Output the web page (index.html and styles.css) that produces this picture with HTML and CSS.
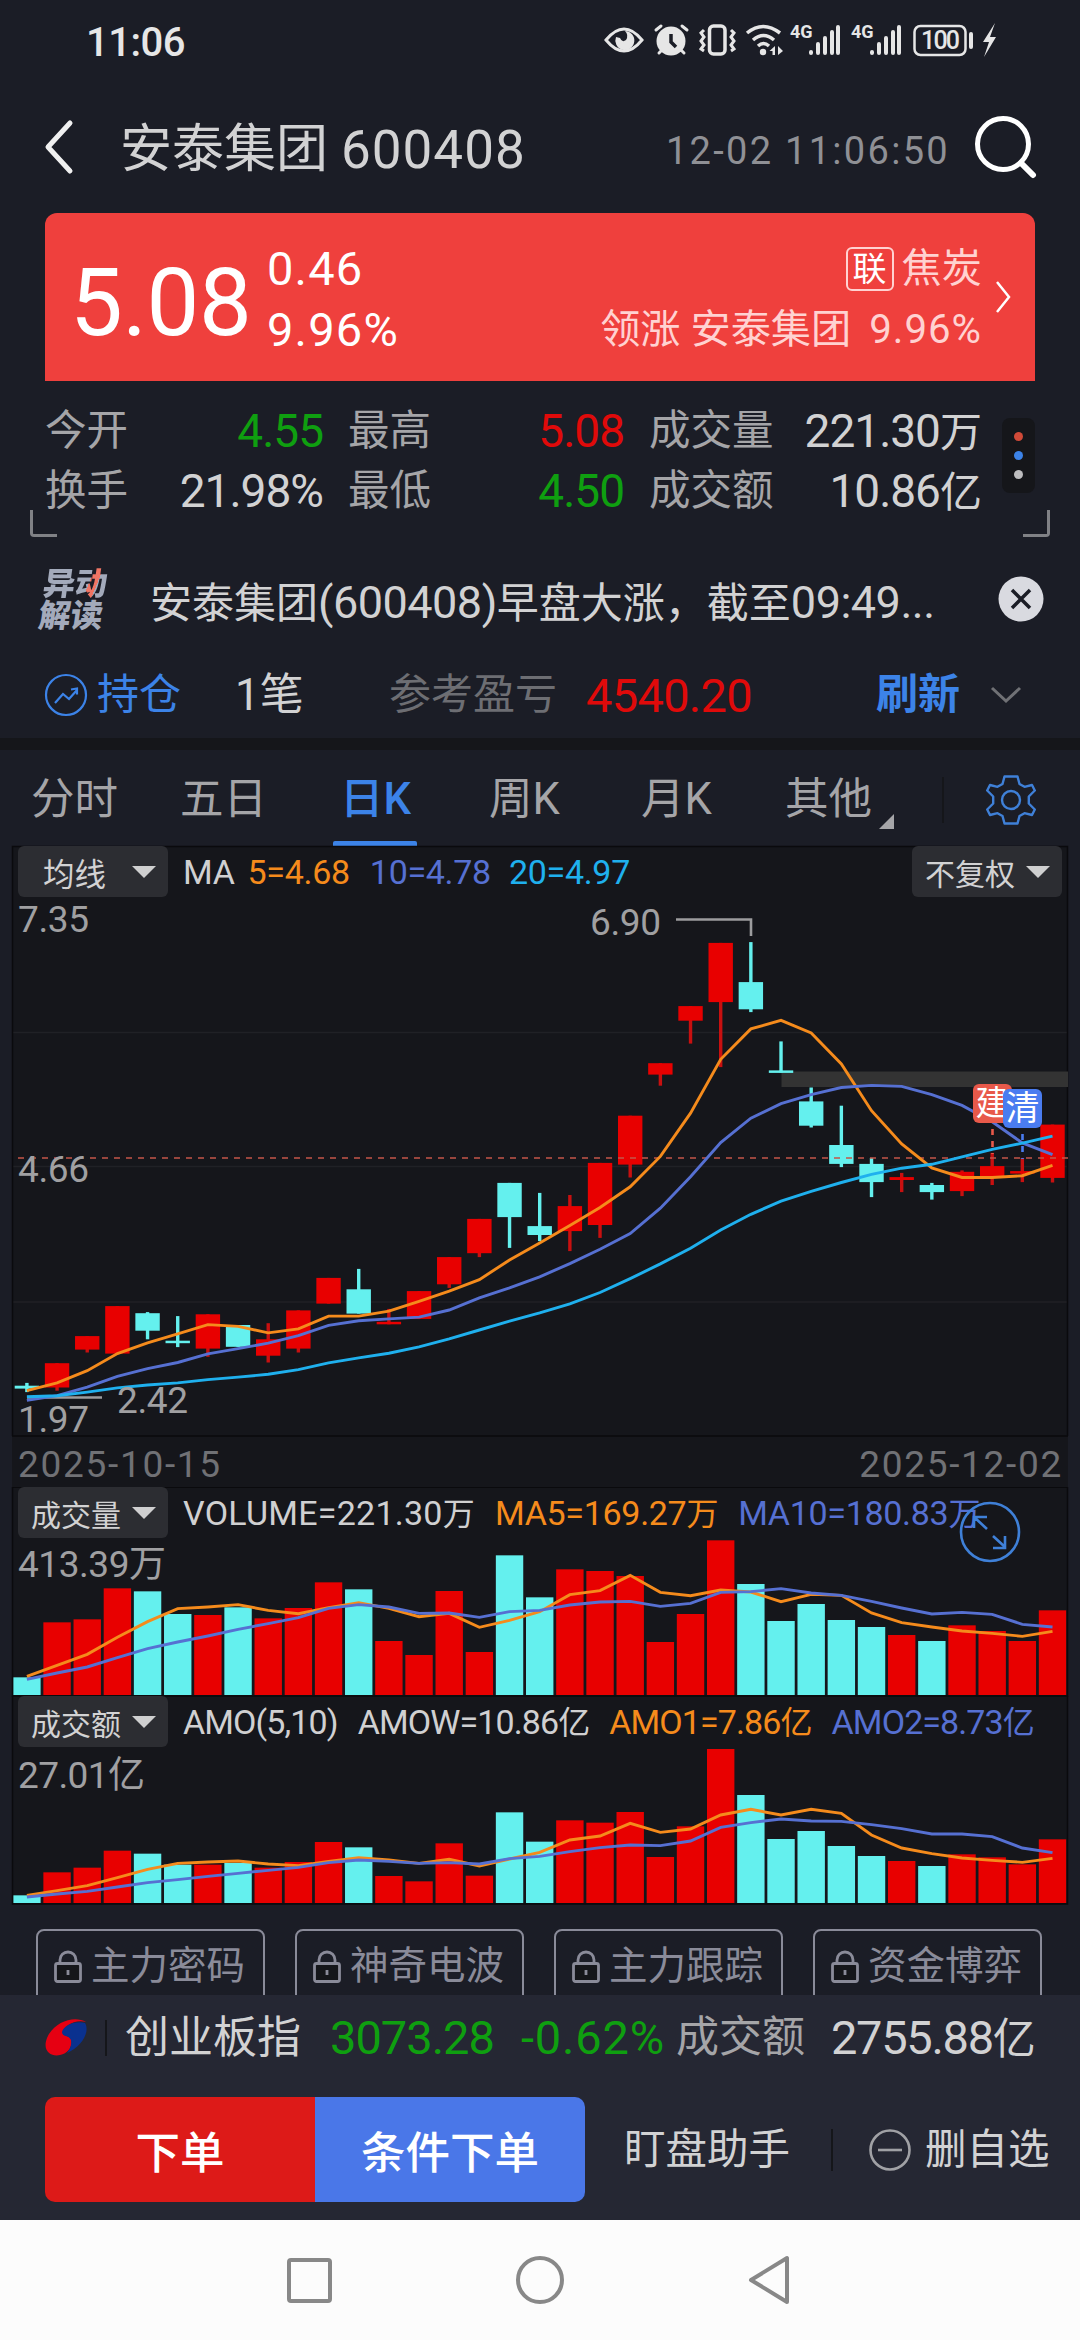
FILE: index.html
```html
<!DOCTYPE html>
<html lang="zh-CN">
<head>
    <meta charset="UTF-8">
    <title>安泰集团 600408</title>
    <link rel="stylesheet" href="styles.css">
</head>
<body>
    <div class="statusbar">
        <span class="clock">11:06</span>
        <svg class="status-icons" width="410" height="50" viewBox="600 15 410 50">
            <g fill="none" stroke="#e6e6e6" stroke-width="3">
                <path d="M606 40q18-22 36 0q-18 22-36 0z"/>
                <rect x="709.500" y="26" width="15.500" height="28" rx="4" stroke-width="3.500"/>
                <path d="M704 30l-3 3 3 4-3 4 3 4-3 4 3 2M731 30l3 3-3 4 3 4-3 4 3 4-3 2"/>
                <path d="M747 33q16-13 33 0M753 40q10.500-9 21 0M758 46q5.500-5 11 0" stroke-width="3.500"/>
                <rect x="914.500" y="26" width="51" height="29" rx="6" stroke-width="2.500"/>
                <path d="M971 34v13" stroke-width="4" stroke-linecap="round"/>
                <path d="M656 30l5-4M687 30l-5-4M659 53l4-4M684 53l-4-4" stroke-linecap="round"/>
                <path d="M811 52v1M818 44v9M825 38v15M832 32v21M838 27v26" stroke-width="4" stroke-linecap="round"/>
                <path d="M872 52v1M879 44v9M886 38v15M893 32v21M899 27v26" stroke-width="4" stroke-linecap="round"/>
            </g>
            <g fill="#e6e6e6">
                <path d="M616 37a9.500 9.500 0 1 0 9-6q4 4 1 9-4 3-6-2z"/>
                <circle cx="671" cy="41" r="14.500"/>
                <circle cx="763" cy="52" r="3.200"/>
                <path d="M775 46v9h-2.500v-4h-3zM778 46v9l5-4z"/>
                <path d="M995 23l-12 19h6l-5 15 12-20h-6z"/>
            </g>
            <path d="M671 34v8l5 5" fill="none" stroke="#1b1d26" stroke-width="3.500"/>
            <text class="net" x="790" y="38">4G</text>
            <text class="net" x="851" y="38">4G</text>
            <text class="battery" x="921" y="49" textLength="39">100</text>
        </svg>
    </div>

    <header class="header">
        <svg class="back" width="32" height="56" viewBox="0 0 32 56"><path d="M27 4L5 28l22 24" fill="none" stroke="#f0f0f0" stroke-width="5" stroke-linecap="round" stroke-linejoin="round"/></svg>
        <h1 class="name">安泰集团</h1>
        <span class="code">600408</span>
        <span class="time">12-02 11:06:50</span>
        <svg width="64" height="64" viewBox="0 0 64 64"><g fill="none" stroke="#fff" stroke-width="5"><circle cx="29" cy="29" r="25.500"/><path d="M47 48l12 12" stroke-width="6" stroke-linecap="round"/></g></svg>
    </header>

    <section class="price-card">
        <span class="price">5.08</span>
        <div class="change">
            <span>0.46</span>
            <span>9.96%</span>
        </div>
        <div class="sector">
            <div><span class="tag">联</span><span>焦炭</span></div>
            <div>领涨 安泰集团 <span class="pct">9.96%</span></div>
        </div>
        <svg class="more" width="20" height="36" viewBox="0 0 20 36"><path d="M3 3l12 15L3 33" fill="none" stroke="#fff" stroke-width="2.500"/></svg>
    </section>

    <section class="quote">
        <div class="quote-grid">
            <div class="cell"><label>今开</label><b class="down">4.55</b></div>
            <div class="cell"><label>最高</label><b class="up">5.08</b></div>
            <div class="cell"><label>成交量</label><b>221.30<i>万</i></b></div>
            <div class="cell"><label>换手</label><b>21.98%</b></div>
            <div class="cell"><label>最低</label><b class="down">4.50</b></div>
            <div class="cell"><label>成交额</label><b>10.86<i>亿</i></b></div>
        </div>
        <div class="dots"><i class="dot red"></i><i class="dot blue"></i><i class="dot"></i></div>
        <div class="bracket left"></div>
        <div class="bracket right"></div>
    </section>

    <section class="news">
        <div class="news-logo"><span>异动</span><span>解读</span></div>
        <p>安泰集团<em>(600408)</em>早盘大涨，截至<em>09:49...</em></p>
        <svg width="46" height="46" viewBox="0 0 46 46"><circle cx="23" cy="23" r="22.500" fill="#d9dae0"/><path d="M14 14l18 18M32 14L14 32" stroke="#1b1d26" stroke-width="3.500"/></svg>
    </section>

    <section class="holding">
        <svg width="44" height="44" viewBox="0 0 44 44"><g fill="none" stroke="#3c83e8" stroke-width="2.200"><circle cx="22" cy="22" r="20"/><path d="M11 30l8-9 6 5 8-9M27 16.500l6-1v6"/></g></svg>
        <span class="hold-link">持仓</span>
        <span class="hold-count">1笔</span>
        <span class="hold-label">参考盈亏</span>
        <span class="hold-value">4540.20</span>
        <span class="refresh">刷新</span>
        <svg width="32" height="20" viewBox="0 0 32 20"><path d="M2 3l14 13L30 3" fill="none" stroke="#707175" stroke-width="3"/></svg>
    </section>

    <nav class="tabs">
        <a>分时</a>
        <a>五日</a>
        <a class="active">日K</a>
        <a>周K</a>
        <a>月K</a>
        <a class="other">其他</a>
        <span class="gear">
            <svg width="52" height="52" viewBox="-26 -26 52 52"><g fill="none" stroke="#3f80d8" stroke-width="2.400" stroke-linejoin="round"><path d="M-6.500-23.500h13l2 7.500 5 2.800 7.500-1.800 2.800 5.500-6 6v7l6 6-2.800 5.500-7.500-1.800-5 2.800-2 7.500h-13l-2-7.500-5-2.800-7.500 1.800-2.800-5.500 6-6v-7l-6-6 2.800-5.500 7.500 1.800 5-2.800z"/><circle r="9"/></g></svg>
        </span>
    </nav>

    <main class="charts">
        <section class="panel price-panel">
            <svg id="priceChart" class="plot" width="1080" height="590"></svg>
            <div class="legend">
                <button class="select ma">均线</button>
                <span class="k">MA</span>
                <span class="ma5">5=4.68</span>
                <span class="ma10">10=4.78</span>
                <span class="ma20">20=4.97</span>
                <button class="select adjust">不复权</button>
            </div>
            <span class="mark build">建</span>
            <span class="mark clear">清</span>
        </section>
        <div class="dates"><span>2025-10-15</span><span>2025-12-02</span></div>
        <section class="panel vol-panel">
            <svg id="volChart" class="plot" width="1080" height="210"></svg>
            <div class="legend">
                <button class="select">成交量</button>
                <span class="k">VOLUME=221.30<i>万</i></span>
                <span class="ma5">MA5=169.27<i>万</i></span>
                <span class="ma10">MA10=180.83<i>万</i></span>
            </div>
            <svg class="expand" width="62" height="62" viewBox="-31 -31 62 62"><g fill="none" stroke="#3f80d8" stroke-width="2.600"><circle r="29"/><path d="M-3-3l-13-12M-16-4v-11h13M3 4l12 11M15 4v12H3"/></g></svg>
        </section>
        <section class="panel amo-panel">
            <svg id="amoChart" class="plot" width="1080" height="210"></svg>
            <div class="legend">
                <button class="select">成交额</button>
                <span class="k">AMO(5,10)</span>
                <span class="k">AMOW=10.86<i>亿</i></span>
                <span class="ma5">AMO1=7.86<i>亿</i></span>
                <span class="ma10">AMO2=8.73<i>亿</i></span>
            </div>
        </section>
    </main>

    <svg class="defs" width="0" height="0">
        <symbol id="lock" viewBox="0 0 28 34">
            <rect x="1.500" y="13.500" width="25" height="18" rx="2" fill="#15161a" stroke="#8a8b99" stroke-width="2.800"/>
            <path d="M6 13v-3a8 8 0 0 1 16 0v3M14 20v5" fill="none" stroke="#8a8b99" stroke-width="2.800"/>
        </symbol>
    </svg>
    <div class="tools">
        <a><svg width="28" height="34"><use href="#lock"/></svg>主力密码</a>
        <a><svg width="28" height="34"><use href="#lock"/></svg>神奇电波</a>
        <a><svg width="28" height="34"><use href="#lock"/></svg>主力跟踪</a>
        <a><svg width="28" height="34"><use href="#lock"/></svg>资金博弈</a>
    </div>

    <footer class="footer">
        <div class="index-row">
            <svg width="43" height="40" viewBox="0 0 43 40"><path d="M41 4C30-3 9 3 2 20c-5 13 4 19 13 17 9-2 13-9 11-16-2-4-7-2-8-6C18 8 30 1 41 4z" fill="#e60012"/><path d="M40 5C30 2 18 8 17 14c0 5 7 3 9 8 1 5-1 9-4 13C38 28 45 13 40 5z" fill="#0a318f"/></svg>
            <span class="idx-name">创业板指</span>
            <span class="idx-value">3073.28</span>
            <span class="idx-change">-0.62%</span>
            <span class="idx-label">成交额</span>
            <span class="idx-amount">2755.88<i>亿</i></span>
        </div>
        <div class="action-row">
            <button class="order">下单</button>
            <button class="order cond">条件下单</button>
            <span class="helper">盯盘助手</span>
            <span class="remove"><svg width="42" height="42" viewBox="0 0 42 42"><g fill="none" stroke="#a0a1a5" stroke-width="2.600"><circle cx="21" cy="21" r="19.500"/><path d="M9 21h24"/></g></svg>删自选</span>
        </div>
    </footer>

    <div class="sysnav">
        <svg width="504" height="60" viewBox="0 0 504 60"><g fill="none" stroke="#888" stroke-width="4" stroke-linejoin="round"><rect x="2" y="10" width="41" height="41" rx="2"/><circle cx="253" cy="30" r="22"/><path d="M500 8v44L464 30z"/></g></svg>
    </div>

    <script src="chart.js"></script>
</body>
</html>
```
FILE: styles.css
```css
* {
    box-sizing: border-box;
}

body {
    margin: 0;
    width: 1080px;
    height: 2340px;
    overflow: hidden;
    background-color: #1b1d26;
    color: #d2d2d3;
    font-family: Roboto, "Noto Sans CJK SC", sans-serif;
    font-size: 42px;
    line-height: 1;
    white-space: nowrap;
}

i, em {
    font-style: normal;
}

b, h1 {
    font-weight: normal;
}

button {
    border: none;
    font-family: inherit;
    color: inherit;
}

/* status bar */
.statusbar {
    height: 86px;
    padding: 0 70px 0 86px;
    display: flex;
    align-items: center;
    justify-content: space-between;
}

.clock {
    font-size: 40px;
    font-weight: 500;
    color: #e6e6e6;
    letter-spacing: -0.500px;
}

.status-icons {
    margin-bottom: 6px;
}

.net {
    font-size: 18px;
    font-weight: 700;
    fill: #e6e6e6;
}

.battery {
    font-size: 25px;
    font-weight: 500;
    fill: #e6e6e6;
}

/* header */
.header {
    height: 127px;
    padding: 0 42px 5px 43px;
    display: flex;
    align-items: center;
}

.name {
    margin: 6px 0 0 45px;
    width: 221px;
    font-size: 52px;
}

.code {
    margin-top: 6px;
    font-size: 53px;
    letter-spacing: 1px;
    flex: 1;
}

.time {
    margin: 8px 24px 0 0;
    font-size: 38px;
    letter-spacing: 2.300px;
    color: #8f9095;
}

/* price card */
.price-card {
    height: 168px;
    margin: 0 45px;
    padding: 0 21px 0 25px;
    display: flex;
    align-items: center;
    background-color: #ef403d;
    border-radius: 12px 12px 0 0;
    color: #fff;
}

.price {
    width: 197px;
    margin-top: 12px;
    font-size: 94px;
    letter-spacing: -0.500px;
}

.change {
    flex: 1;
    display: flex;
    flex-direction: column;
    gap: 14px;
    font-size: 47px;
    letter-spacing: 1.200px;
    margin-top: 4px;
}

.sector {
    display: flex;
    flex-direction: column;
    align-items: flex-end;
    gap: 19px;
    margin-top: 4px;
    font-size: 40.200px;
    color: #ffd2d1;
}

.sector div {
    display: flex;
    align-items: center;
    gap: 8px;
    white-space: pre;
}

.tag {
    width: 48px;
    height: 44px;
    border: 2px solid #ffd2d1;
    border-radius: 6px;
    font-size: 34px;
    line-height: 40px;
    text-align: center;
    color: #fff;
}

.pct {
    letter-spacing: 1px;
}

.more {
    margin-left: 12px;
}

/* quote */
.quote {
    position: relative;
    height: 161px;
    padding: 20px 45px 0;
    display: flex;
    gap: 20px;
}

.quote-grid {
    width: 937px;
    height: 120px;
    display: grid;
    grid-template-columns: 278px 276px 332px;
    grid-auto-rows: 60px;
    column-gap: 25px;
}

.cell {
    display: flex;
    align-items: center;
    justify-content: space-between;
}

.cell label {
    color: #a5a5a8;
    font-size: 41.500px;
}

.cell b {
    font-size: 46px;
    letter-spacing: -1px;
}

.cell i {
    font-size: 42px;
}

.up {
    color: #e00a0a;
}

.down {
    color: #0f9f10;
}

.dots {
    width: 33px;
    height: 75px;
    margin-top: 17px;
    padding: 14px 0;
    display: flex;
    flex-direction: column;
    align-items: center;
    justify-content: space-between;
    background-color: #15161a;
    border-radius: 8px;
}

.dot {
    width: 9px;
    height: 9px;
    border-radius: 50%;
    background-color: #bdbdbf;
}

.dot.red {
    background-color: #d04a38;
}

.dot.blue {
    background-color: #3c83e8;
}

.bracket {
    position: absolute;
    bottom: 5px;
    width: 27px;
    height: 27px;
    border-bottom: 3px solid #808185;
}

.bracket.left {
    left: 30px;
    border-left: 3px solid #808185;
    border-bottom-left-radius: 4px;
}

.bracket.right {
    right: 30px;
    border-right: 3px solid #808185;
    border-bottom-right-radius: 4px;
}

/* news */
.news {
    height: 110px;
    padding: 4px 36px 0 41px;
    display: flex;
    align-items: center;
}

.news p {
    margin: 6px 0 0;
    flex: 1;
    font-size: 42px;
}

.news em {
    font-size: 45px;
    letter-spacing: -0.500px;
}

.news-logo {
    width: 109px;
    margin-top: 2px;
    display: flex;
    flex-direction: column;
    font-size: 32px;
    font-weight: 900;
    color: #a3aabb;
    transform: skewX(-8deg);
}

.news-logo span:first-child {
    background: linear-gradient(105deg, #a3aabb 0 48px, #f07564 48px 56px, #a3aabb 56px);
    background-clip: text;
    color: transparent;
}

/* holding */
.holding {
    height: 86px;
    padding: 0 58px 0 44px;
    display: flex;
    align-items: center;
}

.hold-link {
    margin-left: 9px;
    width: 138px;
    color: #3c83e8;
}

.hold-count {
    width: 154px;
    font-size: 44px;
}

.hold-label {
    width: 197px;
    color: #6d6e73;
}

.hold-value {
    flex: 1;
    font-size: 47px;
    letter-spacing: -0.700px;
    color: #e00a0a;
}

.refresh {
    margin-right: 30px;
    font-weight: 700;
    color: #3c83e8;
}

/* tabs */
.tabs {
    height: 108px;
    padding: 4px 43px 0 31px;
    border-top: 12px solid #15161a;
    display: grid;
    grid-template-columns: 149px 153px 156px 152px 144px 157px 1fr;
    align-items: center;
    font-size: 43.500px;
    color: #a5a5a8;
}

.tabs a {
    position: relative;
}

.tabs .active {
    padding-left: 7px;
    color: #3c83e8;
    font-weight: 500;
}

.active::after {
    content: "";
    position: absolute;
    left: 0;
    top: 63px;
    width: 84px;
    height: 6px;
    border-radius: 2px 2px 0 0;
    background-color: #3c83e8;
}

.other::after {
    content: "";
    position: absolute;
    left: 94px;
    top: 36px;
    border-left: 15px solid transparent;
    border-bottom: 15px solid #a5a5a8;
}

.gear {
    height: 46px;
    display: flex;
    align-items: center;
    justify-content: flex-end;
    border-left: 2px solid #15161a;
}

/* charts */
.charts {
    background: linear-gradient(#15161b, #15161b) 12px 0 / 1056px 100% no-repeat;
}

.panel {
    position: relative;
}

.price-panel {
    height: 590px;
}

.vol-panel {
    height: 209px;
}

.amo-panel {
    height: 208px;
}

.plot {
    position: absolute;
    left: 0;
    top: 0;
    overflow: visible;
}

.legend {
    position: relative;
    height: 51px;
    padding: 0 18px;
    display: flex;
    align-items: center;
    font-size: 34px;
    letter-spacing: -0.300px;
}

.legend span {
    margin-right: 20px;
}

.legend i {
    font-size: 32px;
}

.select {
    height: 51px;
    width: 150px;
    flex-shrink: 0;
    margin-right: 15px;
    padding: 0 12px 0 13px;
    display: flex;
    align-items: center;
    justify-content: space-between;
    background-color: #2c2d32;
    border-radius: 6px;
    font-size: 30px;
}

.select::after {
    content: "";
    border: 12px solid transparent;
    border-top: 12px solid #cfcfd0;
    border-bottom: none;
}

.select.ma {
    padding-left: 25px;
    font-size: 31.500px;
}

.price-panel .k {
    margin-right: 13px;
}

.price-panel .ma10 {
    margin-right: 18px;
}

.vol-panel .k {
    letter-spacing: 0.250px;
}

.amo-panel .legend {
    letter-spacing: -0.900px;
}

.select.adjust {
    margin: 0 0 0 auto;
}

.k {
    color: #d0d0d1;
}

.ma5 {
    color: #f58b1c;
}

.ma10 {
    color: #5670d2;
}

.ma20 {
    color: #1fb0ee;
}

.mark {
    position: absolute;
    width: 39px;
    height: 39px;
    border-radius: 6px;
    color: #fff;
    font-size: 34px;
    line-height: 38px;
    text-align: center;
}

.build {
    left: 973px;
    top: 238px;
    background-color: #e8594a;
}

.clear {
    left: 1003px;
    top: 243px;
    background-color: #4a7cf0;
}

.dates {
    height: 51px;
    padding: 5px 17px 0 18px;
    display: flex;
    align-items: center;
    justify-content: space-between;
    font-size: 37px;
    letter-spacing: 1.700px;
    color: #707175;
}

.expand {
    position: absolute;
    left: 959px;
    top: 14px;
}

.axis {
    font-size: 37px;
    fill: #a0a0a2;
}

/* locked indicators, cut off by the footer */
.defs {
    position: absolute;
}

.tools {
    height: 91px;
    padding: 25px 36px 0;
    overflow: hidden;
    display: flex;
    gap: 30px;
}

.tools a {
    width: 229px;
    height: 80px;
    padding: 1px 0 6px 16px;
    display: flex;
    align-items: center;
    gap: 9px;
    border: 2px solid #8a8b99;
    border-radius: 8px;
    font-size: 38.500px;
    color: #8a8b99;
}

/* footer */
.footer {
    height: 225px;
    background-color: #252733;
}

.index-row {
    height: 88px;
    padding: 0 0 3px 45px;
    display: flex;
    align-items: center;
    font-size: 44px;
}

.idx-name {
    margin-left: 17px;
    padding-left: 20px;
    width: 225px;
    background: linear-gradient(#15161a, #15161a) 0 50% / 2px 36px no-repeat;
}

.idx-value, .idx-change {
    font-size: 47px;
    letter-spacing: -1px;
    color: #0f9f10;
}

.idx-value {
    width: 191px;
}

.idx-change {
    width: 155px;
    letter-spacing: 0.800px;
}

.idx-label {
    width: 155px;
    font-size: 43px;
    color: #a5a5a8;
}

.idx-amount {
    font-size: 47px;
    letter-spacing: -1.300px;
}

.idx-amount i {
    font-size: 43px;
}

.action-row {
    height: 105px;
    margin-top: 14px;
    padding-left: 45px;
    display: flex;
    align-items: center;
    font-size: 41.500px;
}

.order {
    width: 270px;
    height: 105px;
    background-color: #dd1a18;
    border-radius: 10px 0 0 10px;
    font-size: 44.500px;
    font-weight: 500;
    color: #fff;
}

.order.cond {
    background-color: #4a77e8;
    border-radius: 0 10px 10px 0;
}

.helper {
    width: 246px;
    padding-left: 39px;
}

.remove {
    height: 42px;
    padding-left: 36px;
    border-left: 2px solid #15161a;
    display: flex;
    align-items: center;
    gap: 14px;
}

/* system navigation */
.sysnav {
    height: 120px;
    padding-left: 287px;
    display: flex;
    align-items: center;
    background-color: #fcfcfc;
}
```
FILE: chart.js
```js
const RED = '#e80000';
const CYAN = '#64f0ee';
const ORANGE = '#f58b1c';
const PURPLE = '#5670d2';
const BLUE = '#1fb0ee';

const X0 = 26.9;
const STEP = 30.165;

// [up, body top, body bottom, high, low]
const candles = [
    [0, 539.7, 542.6, 536.9, 546.1], [1, 517.2, 541.5, 517.2, 544.7], [1, 490.1, 503.6, 490.1, 506.5],
    [1, 460.1, 507.6, 460.1, 507.6], [0, 467.2, 484.7, 466.1, 493.3], [0, 494.7, 497.2, 470.1, 501.1],
    [1, 468.3, 502.6, 468.3, 510.8], [0, 479, 500.8, 479, 500.8], [1, 493.3, 509.7, 477.2, 516.5],
    [1, 464.4, 502.6, 464.4, 506.5], [1, 431.9, 457.6, 431.9, 457.6], [0, 443.3, 467.6, 422.9, 467.6],
    [1, 475.8, 478.3, 462.9, 478.3], [1, 445.1, 472.9, 445.1, 472.9], [1, 411.1, 438.3, 411.1, 441.9],
    [1, 372.9, 407.2, 372.9, 411.1], [0, 336.9, 371.1, 336.9, 401.9], [0, 380.1, 389, 346.9, 395.1],
    [1, 360.1, 385.1, 349, 405.1], [1, 316.9, 379, 316.9, 391.9], [1, 269.7, 318.6, 269.7, 331.5],
    [1, 217.2, 228.6, 217.2, 239.7], [1, 160.1, 174.7, 160.1, 197.6], [1, 96.9, 156.1, 96.9, 221.1],
    [0, 136.1, 163.3, 96.1, 166.1], [0, 224.4, 226.5, 195.4, 226.5], [0, 255.4, 279.7, 241.5, 281.5],
    [0, 299, 317.9, 259.7, 321.1], [0, 317.9, 336.1, 311.9, 351.1], [1, 331.1, 334, 326.9, 346.1],
    [0, 339, 346.1, 336.9, 353.6], [1, 325.8, 345.1, 324.4, 350.1], [1, 320.1, 331.1, 306.9, 339],
    [1, 325.1, 327.6, 311.9, 336.1], [1, 278.6, 331.9, 278.6, 336.5]
];
const ma5 = [544.7, 536.9, 524.7, 507.6, 496.9, 487.9, 478.6, 480.4, 486.9, 482.9, 470.1, 470.1, 465.1, 455.4, 445.1, 433.6, 414, 396.9, 379.4, 361.5, 340.8, 310.4, 267.2, 213.3, 182.9, 174.4, 186.9, 217.9, 264.7, 297.9, 321.9, 331.5, 331.5, 329.7, 319.4];
const ma10 = [554.4, 549.7, 541.1, 530.4, 522.6, 516.5, 507.9, 502.6, 497.2, 489.7, 479.4, 474.7, 472.9, 471.1, 464, 451.9, 441.9, 430.8, 417.6, 403.3, 387.6, 362.2, 330.8, 296.5, 272.2, 257.6, 248.6, 241.5, 239.4, 240.4, 248.6, 259.4, 275.8, 296.9, 308.6];
const ma20 = [550.8, 549.7, 546.1, 541.9, 539, 536.9, 533.6, 531.1, 528.3, 523.6, 516.9, 511.9, 507.2, 500.8, 492.9, 484, 475.1, 466.9, 457.9, 446.5, 432.6, 417.9, 402.2, 384, 368.3, 355.1, 345.4, 336.5, 328.3, 322.2, 318.3, 310.8, 303.3, 297.2, 290.1];

// volume and amount are distances from the top of the panel, three units to a pixel
const vol = [742, 577, 568, 475, 484, 552, 555, 532, 565, 534, 457, 478, 633, 675, 483, 666, 376, 502, 418, 423, 438, 636, 552, 331, 462, 573, 522, 570, 591, 615, 633, 586, 603, 633, 541];
const vol5 = [739, 706, 673, 622, 575, 536, 531, 524, 541, 551, 533, 518, 535, 560, 550, 592, 571, 545, 494, 482, 436, 487, 497, 480, 486, 515, 493, 496, 549, 578, 591, 603, 610, 619, 604];
const vol10 = [748, 729, 711, 683, 656, 636, 618, 598, 581, 563, 535, 524, 531, 550, 549, 562, 545, 541, 525, 516, 514, 529, 520, 487, 485, 476, 489, 496, 514, 534, 552, 547, 553, 583, 591];
const amo = [1396, 1327, 1313, 1262, 1271, 1304, 1304, 1299, 1313, 1296, 1236, 1252, 1338, 1354, 1240, 1337, 1147, 1235, 1171, 1178, 1146, 1281, 1189, 957, 1095, 1227, 1203, 1248, 1278, 1293, 1308, 1273, 1282, 1303, 1228];
const amo5 = [1396, 1382, 1367, 1343, 1318, 1300, 1296, 1293, 1302, 1307, 1294, 1283, 1290, 1300, 1288, 1308, 1287, 1267, 1230, 1218, 1180, 1207, 1197, 1155, 1138, 1155, 1138, 1150, 1215, 1254, 1271, 1284, 1291, 1297, 1285];
const amo10 = [1401, 1392, 1384, 1371, 1358, 1349, 1339, 1330, 1321, 1312, 1298, 1290, 1294, 1300, 1298, 1302, 1286, 1279, 1265, 1253, 1245, 1247, 1233, 1192, 1178, 1167, 1173, 1174, 1184, 1196, 1212, 1212, 1220, 1254, 1268];

const x = i => X0 + STEP * i;

function rect(x, y, w, h, fill) {
    return `<rect x="${x}" y="${y}" width="${w}" height="${h}" fill="${fill}"/>`;
}

function line(values, color) {
    const points = values.map((v, i) => `${x(i)},${v}`).join(' ');
    return `<polyline points="${points}" fill="none" stroke="${color}" stroke-width="2.9"/>`;
}

function path(d, color, extra = '') {
    return `<path d="${d}" fill="none" stroke="${color}" ${extra}/>`;
}

function label(text, x, y, w) {
    return `<text class="axis" x="${x}" y="${y}" textLength="${w}">${text}</text>`;
}

function drawPrice() {
    let out = path('M12 186.500H1068M12 320.500H1068M12 456H1068', '#202126', 'stroke-width="1.500"');
    out += path('M12.500 590V.5H1067.500V590M12 590H1068', '#0a0a0d', 'stroke-width="1.500"');
    out += rect(781.5, 225.5, 286.5, 15.500, '#333');
    candles.forEach(([up, top, bottom, high, low], i) => {
        const color = up ? RED : CYAN;
        out += rect(x(i) - 1.7, high, 3.4, low - high, up ? '#c81010' : color);
        out += rect(x(i) - 12.2, top, 24.4, Math.max(bottom - top, 2.5), color);
    });
    out += path('M18 312H1068', '#c4554a', 'stroke-width="1.700" stroke-dasharray="6 6"');
    out += path('M27 551.500H102', '#9c9c9e', 'stroke-width="2.500"');
    out += path('M676 73.500H751V90', '#9c9c9e', 'stroke-width="2.600"');
    out += line(ma5, ORANGE) + line(ma10, PURPLE) + line(ma20, BLUE);
    out += path('M992.500 283V308', '#e8594a', 'stroke-width="2.600" stroke-dasharray="6 6"');
    out += path('M1022.500 288V313', '#4a7cf0', 'stroke-width="2.600" stroke-dasharray="6 6"');
    out += label('7.35', 18, 86, 71) + label('4.66', 18, 336, 71) + label('1.97', 18, 586, 71);
    out += label('2.42', 117, 567, 71) + label('6.90', 590, 89, 71);
    document.getElementById('priceChart').innerHTML = out;
}

function drawBars(id, data, avg5, avg10, offset, base, labelSvg) {
    const y = v => (v - offset) / 3;
    let out = labelSvg;
    data.forEach((v, i) => {
        out += rect(x(i) - 13.7, y(v), 27.4, base - y(v), candles[i][0] ? RED : CYAN);
    });
    out += line(avg5.map(y), ORANGE) + line(avg10.map(y), PURPLE);
    out += path(`M12.500 0V${base + 1}H1067.500V0`, '#0a0a0d', 'stroke-width="1.500"');
    document.getElementById(id).innerHTML = out;
}

drawPrice();
drawBars('volChart', vol, vol5, vol10, 171, 208, path('M12 .5H1068', '#0a0a0d') + label('413.39万', 18, 90, 148));
drawBars('amoChart', amo, amo5, amo10, 798, 207, label('27.01亿', 18, 92, 127));
```
